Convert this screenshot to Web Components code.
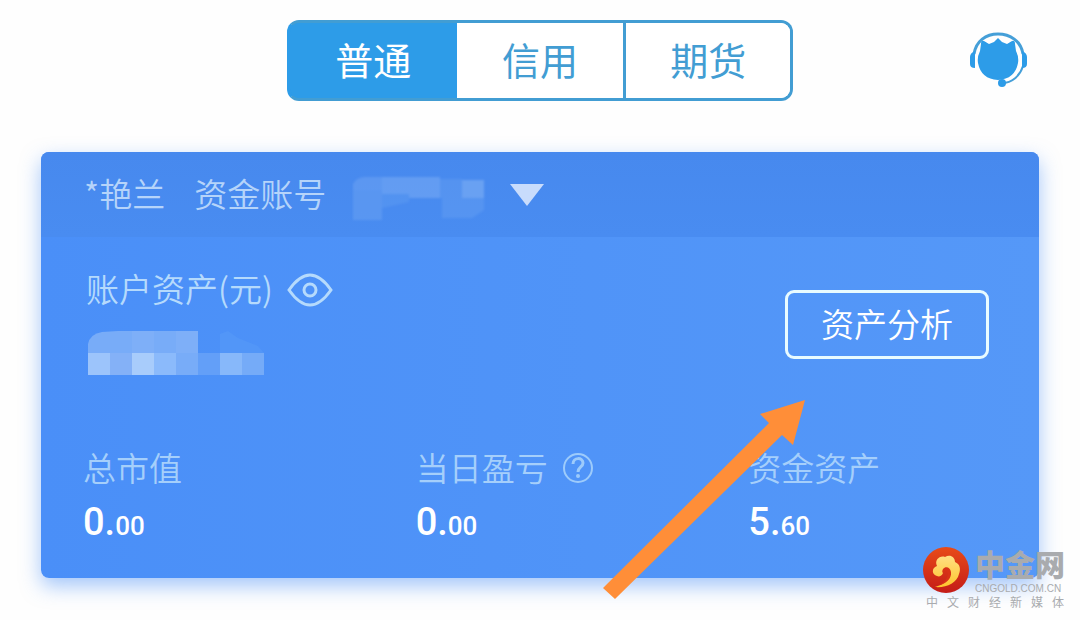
<!DOCTYPE html>
<html lang="zh-CN">
<head>
<meta charset="utf-8">
<meta name="viewport" content="width=device-width, initial-scale=1">
<title>账户资产</title>
<style>
body { margin: 0; background: #fefefe; font-family: "Noto Sans CJK SC", sans-serif; }
</style>
</head>
<body>
<account-page></account-page>
<script>
function define(name, html, setup) {
  const template = document.createElement('template');
  template.innerHTML = html;
  customElements.define(name, class extends HTMLElement {
    constructor() {
      super();
      this.attachShadow({ mode: 'open' }).append(template.content.cloneNode(true));
      if (setup) setup(this, this.shadowRoot);
    }
  });
}

define('account-tab', `
<style>
:host { display: block; }
:host(:last-child) { border-left: 3px solid #429dd3; }
button { width: 100%; height: 100%; padding: 0 0 4px; border: 0; background: #fff; color: #429dd3; font: inherit; cursor: pointer; }
:host([selected]) button { background: #2d9ce8; color: #fff; }
</style>
<button type="button"><slot></slot></button>`);

define('account-tabs', `
<style>
:host { display: grid; grid-template-columns: repeat(3, 1fr); box-sizing: border-box; width: 506px; height: 81px;
  border: 3px solid #429dd3; border-left-color: #2d9ce8; border-radius: 12px; overflow: hidden; font-size: 38px; line-height: 48px;
  background: linear-gradient(90deg, #2d9ce8 30%, #fff 30%); }
</style>
<slot></slot>`);

define('support-button', `
<style>
:host { display: block; }
button { display: block; padding: 0; border: 0; background: none; cursor: pointer; }
svg { display: block; }
</style>
<button type="button" aria-label="客服">
<svg width="60" height="58" viewBox="0 0 60 58" fill="none">
<path d="M12 12Q12 8 15 9L20 12L25 10L29 6L33 10L38 12L43 9Q46 8 46 12L47 19Q50 25 49 31Q46 47 29 48Q12 47 9 31Q8 25 11 19Z" fill="#2d9ce8"/>
<path d="M5 22C7 9 17 2 29 2S52 9 54 22" stroke="#459fd8" stroke-width="3"/>
<path d="M54 34C51 44 43 51 33 51" stroke="#459fd8" stroke-width="2"/>
<path d="M6 19V36Q1 36 1 32V25Q1 21 6 19ZM53 19Q58 21 58 25V32Q58 36 53 36Z" fill="#2d9ce8"/>
<ellipse cx="33" cy="51" rx="4" ry="4" fill="#2d9ce8"/>
</svg></button>`);

define('account-bar', `
<style>
:host { display: flex; align-items: center; box-sizing: border-box; height: 85px; padding: 0 43px; background: linear-gradient(#4789ee, #498cf1);
  color: #b5d4fa; font-size: 33px; line-height: 44px; font-weight: 350; }
span { padding-bottom: 4px; }
.name { margin-right: 29px; }
button { display: flex; align-items: center; gap: 24px; margin-left: 26px; padding: 0; border: 0; background: none; cursor: pointer; }
svg { display: block; }
</style>
<span class="name"><slot name="name"></slot></span>
<span><slot></slot></span>
<button type="button" aria-label="切换账号">
<svg width="134" height="54" viewBox="0 -4 134 54">
<defs><filter id="soften" x="-5%" y="-5%" width="110%" height="110%"><feGaussianBlur stdDeviation="1"/></filter></defs>
<g transform="translate(0 4)" fill="#b5d4fa" filter="url(#soften)">
<path d="M1 8Q4 2 12 1H30V14H1Z" opacity=".18"/><path d="M30 1H88V22H57V18H30Z" opacity=".25"/>
<path d="M1 14H30V44H1Z" opacity=".15"/><path d="M30 18H57V26L30 32Z" opacity=".1"/><path d="M88 3H110V42H90V22H88Z" opacity=".12"/>
<path d="M110 4H132V22H110Z" opacity=".3"/><path d="M110 22H132V34L120 42H110Z" opacity=".12"/>
</g></svg>
<svg width="34" height="22" viewBox="0 0 34 22"><path d="M0 0H34L17 22Z" fill="#c8dcfc"/></svg>
</button>`);

define('asset-total', `
<style>
:host { display: flex; flex-direction: column; gap: 16px; color: #b5dafc; font-size: 33px; line-height: 44px; font-weight: 350; }
.label { display: flex; align-items: center; gap: 14px; }
span { padding-bottom: 4px; }
button { padding: 0; border: 0; background: none; cursor: pointer; }
svg { display: block; }
</style>
<div class="label"><span><slot></slot></span>
<button type="button" aria-label="隐藏金额"><svg width="46" height="34" viewBox="0 0 46 34" fill="none" stroke="#b5dafc" stroke-width="3">
<path d="M2 17C9 7 15 2 23 2S37 7 44 17C37 27 31 32 23 32S9 27 2 17Z"/><circle cx="23" cy="17" r="6"/></svg></button></div>
<svg width="180" height="46" viewBox="0 0 180 46" role="img" aria-label="金额已隐藏">
<path d="M2 14Q4 4 16 2L32 1H112V45H2Z" fill="#78acf8"/>
<path d="M46 1H68V23H46ZM90 1H112V23H90Z" fill="#7eaff8"/>
<path d="M2 23H24V45H2Z" fill="#9cc4fb"/><path d="M24 23H46V45H24Z" fill="#84b1f7"/>
<path d="M46 23H68V45H46Z" fill="#a8ccfb"/><path d="M68 23H90V45H68Z" fill="#8bbafb"/>
<path d="M112 23H134V45H112Z" fill="#639ff8"/><path d="M134 23V4L142 1L152 8L172 16L178 23Z" fill="#5296f8"/>
<path d="M134 23H156V45H134Z" fill="#87b8fa"/><path d="M156 23H178V45H156Z" fill="#75abf8"/>
</svg>`);

define('asset-metric', `
<style>
:host { display: flex; flex-direction: column; gap: 5px; padding-left: 42px; }
.label { display: flex; align-items: center; gap: 14px; color: #a5cffb; font-size: 33px; line-height: 44px; font-weight: 350; }
.label span { padding-bottom: 4px; }
.value { color: #fff; font-family: Roboto, sans-serif; font-weight: 500; font-size: 38px; line-height: 48px; }
small { font-size: 26px; }
</style>
<div class="label"><span><slot></slot></span><slot name="help"></slot></div>
<div class="value"></div>`, (host, root) => {
  const [whole, cents] = host.getAttribute('value').split('.');
  const small = document.createElement('small');
  small.textContent = cents;
  root.querySelector('.value').append(whole + '.', small);
});

define('help-button', `
<style>
:host { display: block; }
button { display: block; padding: 0; border: 0; background: none; cursor: pointer; }
svg { display: block; }
</style>
<button type="button" aria-label="说明"><svg width="32" height="32" viewBox="0 0 32 32" fill="none" stroke="#9dcbfb" stroke-width="2">
<circle cx="16" cy="15" r="14"/><path d="M11 11C11 4 21 4 21 10C21 14 16 14 16 19" stroke-width="3"/><circle cx="16" cy="23" r="2" fill="#9dcbfb" stroke="none"/></svg></button>`);

define('outline-button', `
<style>
:host { display: block; }
button { box-sizing: border-box; height: 69px; padding: 0 33px 4px; border: 3px solid #e8fbff; border-radius: 9px; background: none;
  color: #fff; font: inherit; font-size: 33px; line-height: 44px; font-weight: 350; cursor: pointer; white-space: nowrap; }
</style>
<button type="button"><slot></slot></button>`);

define('asset-card', `
<style>
:host { display: block; position: relative; border-radius: 8px; background: linear-gradient(90deg, #4a8ff8, #5598f8);
  box-shadow: 0 8px 20px rgba(74, 143, 248, .5); }
account-bar { border-radius: 8px 8px 0 0; }
.summary { display: flex; justify-content: space-between; padding: 29px 50px 0 45px; }
outline-button { margin-top: 24px; }
.metrics { display: grid; grid-template-columns: repeat(3, 1fr); padding: 69px 0 28px; }
.pointer { position: absolute; right: 232px; bottom: -24px; }
</style>
<account-bar><span slot="name">*艳兰</span>资金账号</account-bar>
<div class="summary"><asset-total>账户资产(元)</asset-total><outline-button>资产分析</outline-button></div>
<div class="metrics">
<asset-metric value="0.00">总市值</asset-metric>
<asset-metric value="0.00">当日盈亏<help-button slot="help"></help-button></asset-metric>
<asset-metric value="5.60">资金资产</asset-metric>
</div>
<svg class="pointer" width="204" height="202" viewBox="0 0 204 202" aria-hidden="true">
<path d="M0 188L166 23L157 14L202 0L190 45L179 35L12 199Z" fill="#ff8e38"/></svg>`);

define('site-mark', `
<style>
:host { display: grid; grid-template-columns: 46px 92px; column-gap: 6px; color: #a9abae; }
svg { display: block; }
.title { margin-bottom: 4px; font-size: 30px; line-height: 32px; font-weight: 900; white-space: nowrap; }
.domain { font: 10px/12px "Liberation Sans", sans-serif; white-space: nowrap; }
.tag { grid-column: 1 / -1; padding: 0 3px; font-size: 12px; line-height: 14px; text-align: justify; text-align-last: justify; text-justify: inter-character; }
</style>
<svg width="46" height="46" viewBox="0 0 46 46">
<defs><linearGradient id="disc" x2="0" y2="1"><stop stop-color="#e84b18"/><stop offset="1" stop-color="#c41c18"/></linearGradient>
<linearGradient id="cloud" x2="0" y2="1"><stop stop-color="#ffe083"/><stop offset="1" stop-color="#ffc42d"/></linearGradient></defs>
<circle cx="23" cy="23" r="23" fill="url(#disc)"/>
<path d="M14 29C9 28 8 21 14 19C11 13 17 8 22 10C27 7 32 10 32 15C37 17 38 22 36 27C34 36 23 41 12 40C20 38 27 33 26 26C25 21 18 22 20 26C19 29 16 30 14 29Z" fill="url(#cloud)"/>
<path d="M20 26C17 20 27 17 28 25C29 32 22 37 17 38C26 32 26 25 23 24Q21 24 20 26Z" fill="#d83217"/></svg>
<div><div class="title">中金网</div><div class="domain">CNGOLD.COM.CN</div></div>
<div class="tag">中文财经新媒体</div>`);

define('account-page', `
<style>
:host { display: block; position: relative; box-sizing: border-box; min-height: 100vh; padding: 20px 41px 42px; }
header { display: grid; grid-template-columns: 1fr auto 1fr; align-items: center; margin-bottom: 51px; }
account-tabs { grid-column: 2; }
support-button { justify-self: end; margin-right: 10px; }
site-mark { position: absolute; right: 13px; top: 547px; }
</style>
<header><account-tabs><account-tab selected>普通</account-tab><account-tab>信用</account-tab><account-tab>期货</account-tab></account-tabs><support-button></support-button></header>
<main><asset-card></asset-card></main>
<site-mark></site-mark>`);
</script>
</body>
</html>
